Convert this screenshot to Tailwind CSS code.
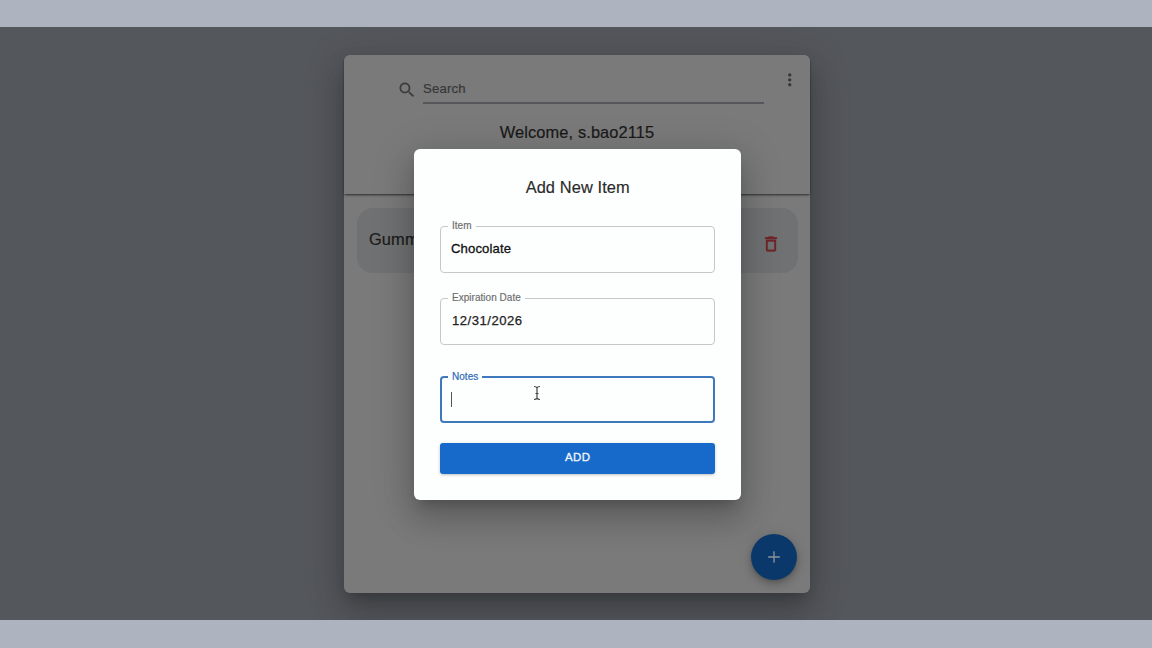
<!DOCTYPE html>
<html lang="en">
<head>
<meta charset="utf-8">
<title>Add New Item</title>
<script src="https://cdn.jsdelivr.net/npm/@tailwindcss/browser@4"></script>
</head>
<body class="bg-[#adb4bf] font-['Liberation_Sans',Arial,sans-serif] antialiased">
<div class="h-[648px] w-[1152px] overflow-hidden pt-[27px]">
  <div class="relative h-[593px] overflow-hidden bg-[#54575c] pt-[28px]">
    <main class="relative ml-[344px] flex h-[538px] w-[466px] flex-col rounded-[6px] bg-[#7a7a7a] shadow-[0_9px_12px_-6px_rgba(0,0,0,.2),0_20px_31px_2px_rgba(0,0,0,.14),0_7px_38px_7px_rgba(0,0,0,.12)]">
      <header class="h-[139px] rounded-t-[6px] bg-[#7a7a7a] shadow-[0_2px_3px_-1px_rgba(0,0,0,.4),0_1px_2px_rgba(0,0,0,.35)]">
        <div class="flex pt-[20px] pl-[53px]">
          <svg class="mt-[5px] size-[20px] text-[#3b3b3b]" viewBox="0 0 24 24" fill="currentColor"><path d="M15.5 14h-.79l-.28-.27C15.41 12.59 16 11.11 16 9.5 16 5.91 13.09 3 9.5 3S3 5.91 3 9.5 5.91 16 9.5 16c1.61 0 3.09-.59 4.23-1.57l.27.28v.79l5 4.99L20.49 19l-4.99-5zm-6 0C7.01 14 5 11.99 5 9.5S7.01 5 9.5 5 14 7.01 14 9.5 11.99 14 9.5 14z"/></svg>
          <div class="ml-[6px] h-[29px] w-[341px] border-b-2 border-[#56565a] pt-[4px] text-[13.2px] leading-[20px] tracking-[0.14px] text-[#373737] [-webkit-text-stroke:0.2px]">Search</div>
          <svg class="mt-[-5px] ml-[16px] size-[19.5px] text-[#383838]" viewBox="0 0 24 24" fill="currentColor"><path d="M12 8c1.100 0 2-.9 2-2s-.9-2-2-2-2 .9-2 2 .9 2 2 2zm0 2c-1.100 0-2 .9-2 2s.9 2 2 2 2-.9 2-2-.9-2-2-2zm0 6c-1.100 0-2 .9-2 2s.9 2 2 2 2-.9 2-2-.9-2-2-2z"/></svg>
        </div>
        <h1 class="mt-[18px] text-center text-[16.400px] leading-[20px] tracking-[0.12px] text-[#191919] [-webkit-text-stroke:0.2px]">Welcome, s.bao2115</h1>
      </header>
      <div class="mx-[12.5px] mt-[14px] flex h-[65px] justify-between rounded-[16px] bg-[#6f7173] pr-[17px] pl-[12.5px]">
        <span class="pt-[21px] text-[16.400px] leading-[20px] tracking-[0.12px] text-[#1b1b1b] [-webkit-text-stroke:0.2px]">Gummies</span>
        <svg class="mt-[26px] size-[20px] text-[#712529]" viewBox="0 0 24 24" fill="currentColor" stroke="currentColor" stroke-width=".4"><path d="M6 19c0 1.100.9 2 2 2h8c1.100 0 2-.9 2-2V7H6v12zM8 9h8v10H8V9zm7.500-5-1-1h-5l-1 1H5v2h14V4z"/></svg>
      </div>
      <button class="mt-auto mr-[13px] mb-[13px] grid size-[46px] place-items-center self-end rounded-full bg-[#0b386a] shadow-[0_2px_4px_-1px_rgba(0,0,0,.2),0_5px_8px_rgba(0,0,0,.14),0_1px_14px_rgba(0,0,0,.12)]">
        <svg class="size-[20px] text-[#8b929b]" viewBox="0 0 24 24" fill="currentColor"><path d="M19 12.800h-6.200V19h-1.600v-6.200H5v-1.600h6.200V5h1.600v6.200H19z"/></svg>
      </button>
    </main>

    <section role="dialog" class="absolute top-[122px] left-[414px] flex h-[350.5px] w-[327.400px] flex-col rounded-[6px] bg-[#fdfefe] px-[26px] pt-[28px] shadow-[0_9px_12px_-6px_rgba(0,0,0,.2),0_20px_31px_2px_rgba(0,0,0,.14),0_7px_38px_7px_rgba(0,0,0,.12)]">
      <h2 class="text-center text-[16.400px] leading-[20px] tracking-[0.1px] text-[#2a2a2a] [-webkit-text-stroke:0.15px]">Add New Item</h2>
      <fieldset class="mt-[23px] h-[53px] rounded-[4px] border border-[#c6c7c8] pl-[7px]">
        <legend class="h-[12px] px-[4px] text-[10px] leading-[12px] tracking-[0.03px] text-[#6c6c6c] [-webkit-text-stroke:0.15px]">Item</legend>
        <div class="pt-[7px] pl-[3px] text-[13.100px] leading-[20px] tracking-[0.12px] text-[#111] [-webkit-text-stroke:0.3px]">Chocolate</div>
      </fieldset>
      <fieldset class="mt-[19px] h-[53px] rounded-[4px] border border-[#c6c7c8] pl-[7px]">
        <legend class="h-[12px] px-[4px] text-[10px] leading-[12px] tracking-[0.03px] text-[#6c6c6c] [-webkit-text-stroke:0.15px]">Expiration Date</legend>
        <div class="pt-[7px] pl-[4px] text-[13.100px] leading-[20px] tracking-[0.5px] text-[#222] [-webkit-text-stroke:0.25px]">12/31/2026</div>
      </fieldset>
      <fieldset class="mt-[26px] h-[52px] rounded-[4px] border-2 border-[#3f79bd] pl-[6px]">
        <legend class="h-[12px] px-[4px] text-[10px] leading-[12px] tracking-[0.03px] text-[#2c6cb8] [-webkit-text-stroke:0.2px]">Notes</legend>
        <div class="mt-[9px] ml-[3px] h-[15px] w-px bg-[#555]"></div>
      </fieldset>
      <button class="mt-[20px] h-[30.5px] rounded-[3px] bg-[#186aca] pb-[1px] text-[11.500px] font-medium tracking-[0.3px] text-[#f1f6fc] shadow-[0_1px_3px_rgba(0,0,0,.25)] [-webkit-text-stroke:0.3px]">ADD</button>
    </section>

    <svg class="absolute top-[358px] left-[532px] h-[16px] w-[10px]" viewBox="0 0 10 16" fill="none" stroke="#444" stroke-width="1.200"><path d="M2 1.500Q4.500 1.500 5 3Q5.500 1.500 8 1.500M5 3V13M2 14.500Q4.500 14.500 5 13Q5.500 14.500 8 14.500M3.500 8.500H6.500"/></svg>
  </div>
</div>
</body>
</html>
